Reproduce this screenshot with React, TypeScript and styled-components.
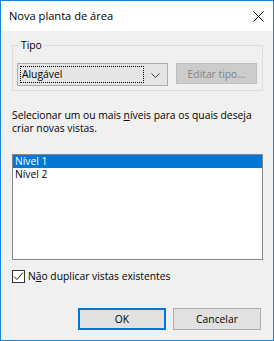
import React from "react";
import styled, { createGlobalStyle } from "styled-components";

const GlobalStyle = createGlobalStyle`
  html, body {
    margin: 0;
    padding: 0;
    background: #ffffff;
  }
  * {
    box-sizing: border-box;
  }
`;

const Window = styled.div`
  width: 274px;
  height: 341px;
  border: 1px solid #1883d7;
  background: #f0f0f0;
  display: flex;
  flex-direction: column;
  font-family: "Open Sans", "Noto Sans", sans-serif;
  font-size: 10.3px;
  color: #000000;
`;

const TitleBar = styled.div`
  height: 30px;
  flex: none;
  background: #ffffff;
  display: flex;
  align-items: center;
  justify-content: space-between;
  padding: 0 9px 0 8px;
`;

const TitleText = styled.span`
  font-size: 11.1px;
  line-height: 14px;
`;

const CloseIcon = styled.svg`
  width: 11px;
  height: 11px;
  display: block;
`;

const Body = styled.div`
  flex: 1;
  display: flex;
  flex-direction: column;
  padding: 0 10px 10px 11px;
`;

const Group = styled.div`
  position: relative;
  margin-top: 14px;
  border: 1px solid #dcdcdc;
  padding: 17px 5px 4px 4px;
`;

const Legend = styled.span`
  position: absolute;
  top: -8px;
  left: 6px;
  padding: 0 2px;
  background: #f0f0f0;
  line-height: 14px;
`;

const TypeRow = styled.div`
  display: flex;
  align-items: flex-start;
  gap: 8px;
`;

const Combo = styled.div`
  width: 151px;
  height: 23px;
  border: 1px solid #adadad;
  background: #e5e5e5;
  display: flex;
  align-items: center;
  padding: 0 3px 0 2px;
`;

const ComboValue = styled.div`
  flex: 1;
  height: 17px;
  border: 1px dotted #000000;
  display: flex;
  align-items: center;
  padding-left: 1px;
  line-height: 13px;
`;

const Chevron = styled.svg`
  width: 9px;
  height: 5px;
  margin: 1px 4px 0 7px;
  display: block;
`;

const DisabledButton = styled.div`
  width: 81px;
  height: 21px;
  border: 1px solid #bfbfbf;
  background: #cccccc;
  color: #838383;
  display: flex;
  align-items: center;
  justify-content: center;
`;

const Description = styled.p`
  margin: 18px 0 0 0;
  line-height: 13px;
`;

const ListBox = styled.div`
  margin-top: 19px;
  height: 106px;
  border: 1px solid #828790;
  background: #ffffff;
  display: flex;
  flex-direction: column;
`;

const ListItem = styled.div<{ $selected?: boolean }>`
  height: 13px;
  line-height: 13px;
  padding-left: 2px;
  background: ${(p) => (p.$selected ? "#0078d7" : "transparent")};
  color: ${(p) => (p.$selected ? "#ffffff" : "#000000")};
`;

const CheckRow = styled.label`
  margin-top: 10px;
  display: flex;
  align-items: center;
  gap: 3px;
  line-height: 13px;
`;

const CheckBox = styled.span`
  width: 13px;
  height: 13px;
  border: 1px solid #333333;
  background: #ffffff;
  display: flex;
  align-items: center;
  justify-content: center;
`;

const Footer = styled.div`
  margin-top: auto;
  display: flex;
  justify-content: flex-end;
  gap: 7px;
  padding-right: 2px;
`;

const DialogButton = styled.button<{ $default?: boolean }>`
  width: 88px;
  height: 22px;
  margin: 0;
  padding: 0;
  font: inherit;
  color: #000000;
  background: #e1e1e1;
  border: ${(p) => (p.$default ? "2px solid #0078d7" : "1px solid #adadad")};
  display: flex;
  align-items: center;
  justify-content: center;
`;

const Key = styled.u`
  text-underline-offset: 1px;
`;

export default function App() {
  return (
    <>
      <GlobalStyle />
      <Window>
        <TitleBar>
          <TitleText>Nova planta de área</TitleText>
          <CloseIcon viewBox="0 0 11 11">
            <path d="M0.5 0.5 L10.5 10.5 M10.5 0.5 L0.5 10.5" stroke="#000" strokeWidth="1" fill="none" />
          </CloseIcon>
        </TitleBar>
        <Body>
          <Group>
            <Legend>Tipo</Legend>
            <TypeRow>
              <Combo>
                <ComboValue>Alugável</ComboValue>
                <Chevron viewBox="0 0 9 5">
                  <path d="M0.5 0.5 L4.5 4.5 L8.5 0.5" stroke="#333" strokeWidth="1" fill="none" />
                </Chevron>
              </Combo>
              <DisabledButton>Editar tipo...</DisabledButton>
            </TypeRow>
          </Group>
          <Description>
            Selecionar um ou mais <Key>n</Key>íveis para os quais deseja criar novas vistas.
          </Description>
          <ListBox>
            <ListItem $selected>Nível 1</ListItem>
            <ListItem>Nível 2</ListItem>
          </ListBox>
          <CheckRow>
            <CheckBox>
              <svg width="11" height="11" viewBox="0 0 11 11">
                <path d="M1 5.5 L4 8.5 L10 1.5" stroke="#222" strokeWidth="1" fill="none" />
              </svg>
            </CheckBox>
            <span>
              N<Key>ã</Key>o duplicar vistas existentes
            </span>
          </CheckRow>
          <Footer>
            <DialogButton $default>OK</DialogButton>
            <DialogButton>Cancelar</DialogButton>
          </Footer>
        </Body>
      </Window>
    </>
  );
}
